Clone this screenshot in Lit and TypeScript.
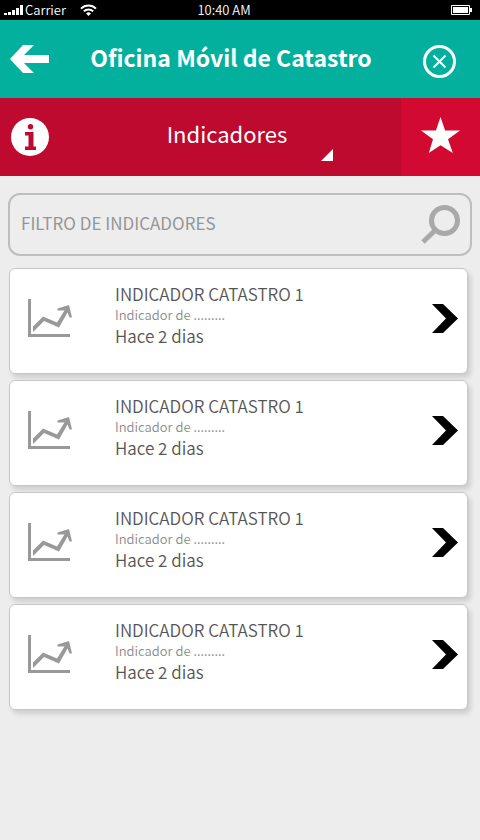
import { LitElement, html, css } from "lit";
import { customElement, property } from "lit/decorators.js";

interface Indicator {
  title: string;
  detail: string;
  age: string;
}

const INDICATORS: Indicator[] = Array.from({ length: 4 }, () => ({
  title: "INDICADOR CATASTRO 1",
  detail: "Indicador de .........",
  age: "Hace 2 dias",
}));

@customElement("status-bar")
class StatusBar extends LitElement {
  static styles = css`
    :host {
      display: grid;
      grid-template-columns: 1fr auto 1fr;
      align-items: center;
      height: 20px;
      padding: 0 8px 0 4px;
      background: #000;
      color: #fff;
      font-size: 13px;
      font-weight: 350;
      line-height: 18px;
    }
    .left {
      display: flex;
      align-items: center;
    }
    .carrier {
      width: 55px;
      margin-left: 2px;
    }
    .right {
      display: flex;
      justify-content: flex-end;
    }
    .time {
      padding-right: 28px;
    }
    svg {
      display: block;
    }
  `;

  render() {
    return html`
      <div class="left">
        <svg width="19" height="10" viewBox="0 0 19 10" fill="#fff" aria-hidden="true">
          <path d="M0 8h3v2H0zM4 7h3v3H4zM8 5h3v5H8zM12 3h3v7h-3zM16 0h3v10h-3z" />
        </svg>
        <span class="carrier">Carrier</span>
        <svg width="17" height="12" viewBox="0 0 17 12" fill="none" stroke="#fff" stroke-width="2" aria-hidden="true">
          <path d="M1 4.6a10.6 10.6 0 0 1 15 0M3.8 7.4a6.6 6.6 0 0 1 9.4 0" />
          <path d="M8.5 12L6 9.6a3.5 3.5 0 0 1 5 0z" fill="#fff" stroke="none" />
        </svg>
      </div>
      <span class="time">10:40 AM</span>
      <div class="right">
        <svg width="21" height="10" viewBox="0 0 21 10" fill="#fff" aria-hidden="true">
          <path d="M.5.5h18v9H.5z" fill="none" stroke="#fff" />
          <path d="M2 2h15v6H2zM19 3h2v4h-2z" />
        </svg>
      </div>
    `;
  }
}

@customElement("indicator-card")
class IndicatorCard extends LitElement {
  @property({ attribute: false }) item!: Indicator;

  static styles = css`
    :host {
      display: block;
    }
    .card {
      box-sizing: border-box;
      display: grid;
      grid-template-columns: 87px 1fr auto;
      align-items: center;
      width: 100%;
      padding: 15px 9px 27px 18px;
      border: 1px solid #c6c6c8;
      border-radius: 6px;
      background: #fff;
      box-shadow: 3px 4px 5px rgba(0, 0, 0, 0.13);
      font: inherit;
      font-weight: 350;
      color: #565656;
      text-align: left;
      cursor: pointer;
    }
    .text {
      display: grid;
    }
    .title,
    .age {
      font-size: 17px;
      line-height: 20px;
    }
    .detail {
      font-size: 13px;
      line-height: 22px;
      color: #8c8c8c;
    }
    svg {
      display: block;
      margin-top: 6px;
    }
  `;

  render() {
    return html`
      <button class="card" type="button">
        <svg width="45" height="39" viewBox="0 0 45 39" aria-hidden="true">
          <path d="M1.500 0v36.500H42" fill="none" stroke="#999" stroke-width="3" />
          <path d="M5 27.500L15 17.500L29 23.500L36.500 11.500L29.500 11.500V9.500L41 6L44 18.500L41.500 18.500L39.500 13.500L31 28.500L16 22L5 33z" fill="#999" />
        </svg>
        <span class="text">
          <span class="title">${this.item.title}</span>
          <span class="detail">${this.item.detail}</span>
          <span class="age">${this.item.age}</span>
        </span>
        <svg width="26" height="29" viewBox="0 0 26 29" aria-hidden="true">
          <path d="M0 0h11l15 14.500L11 29H0l14-14.500z" fill="#000" />
        </svg>
      </button>
    `;
  }
}

@customElement("app-root")
class AppRoot extends LitElement {
  static styles = css`
    :host {
      display: block;
      min-height: 100vh;
      background: #ededed;
      font-family: "Noto Sans CJK SC", "Noto Sans", sans-serif;
    }
    button,
    select,
    input {
      margin: 0;
      padding: 0;
      border: 0;
      background: none;
      color: inherit;
      font: inherit;
    }
    button,
    select {
      cursor: pointer;
    }
    svg {
      display: block;
    }
    .header {
      display: flex;
      align-items: center;
      min-height: 78px;
      background: #03b09e;
      color: #fff;
    }
    .back {
      padding: 0 0 0 10px;
    }
    .heading {
      flex: 1;
      margin: 0;
      padding: 0 10px 4px 0;
      font-size: 23px;
      line-height: 32px;
      font-weight: 700;
      text-align: center;
    }
    .close {
      padding: 5px 24px 0 0;
    }
    .section {
      display: flex;
      min-height: 78px;
      background: #bf0a30;
      color: #fff;
    }
    .info {
      padding: 0 4px 0 11px;
    }
    .picker {
      position: relative;
      flex: 1;
      display: flex;
    }
    .picker select {
      flex: 1;
      appearance: none;
      padding-bottom: 8px;
      font-size: 22px;
      text-align: center;
      text-align-last: center;
    }
    .corner {
      position: absolute;
      left: calc(50% + 94px);
      bottom: 15px;
      pointer-events: none;
    }
    .favourite {
      display: grid;
      place-items: center;
      width: 79px;
      padding-bottom: 4px;
      background: #d20a32;
    }
    .content {
      padding: 17px 8px 24px;
    }
    .filter {
      display: flex;
      align-items: center;
      padding: 10px;
      border: 2px solid #bebebe;
      border-radius: 12px;
      color: #999;
    }
    .filter input {
      flex: 1;
      min-width: 0;
      padding: 0 1px 4px;
      font-size: 17px;
      line-height: 24px;
      outline: 0;
    }
    .filter input::placeholder {
      color: #969696;
      font-weight: 400;
      opacity: 1;
    }
    .list {
      display: grid;
      gap: 6px;
      margin: 0;
      padding: 12px 4px 0 1px;
      list-style: none;
    }
  `;

  render() {
    return html`
      <status-bar></status-bar>
      <header class="header">
        <button class="back" type="button" aria-label="Volver">
          <svg width="39" height="28" viewBox="0 0 39 28" fill="#fff">
            <path d="M0 14L13 0h11L14 10h25v8H14l10 10H13z" />
          </svg>
        </button>
        <h1 class="heading">Oficina Móvil de Catastro</h1>
        <button class="close" type="button" aria-label="Cerrar">
          <svg width="33" height="33" viewBox="0 0 33 33" fill="none" stroke="#fff">
            <circle cx="16.500" cy="16.500" r="15" stroke-width="3" />
            <path d="M10.500 10.500l12 12M22.500 10.500l-12 12" stroke-width="2" />
          </svg>
        </button>
      </header>
      <nav class="section">
        <button class="info" type="button" aria-label="Información">
          <svg width="38" height="38" viewBox="0 0 38 38">
            <circle cx="19" cy="19" r="19" fill="#fff" />
            <circle cx="19.500" cy="8.700" r="2.700" fill="#bf0a30" />
            <path d="M14 14h8.500v14.500H25V32H14v-3.500h3.500v-11H14z" fill="#bf0a30" />
          </svg>
        </button>
        <div class="picker">
          <select aria-label="Sección">
            <option>Indicadores</option>
          </select>
          <svg class="corner" width="12" height="12" viewBox="0 0 12 12" fill="#fff" aria-hidden="true">
            <path d="M12 0v12H0z" />
          </svg>
        </div>
        <button class="favourite" type="button" aria-label="Favoritos">
          <svg width="39" height="36" viewBox="0 0 39 36" fill="#fff">
            <path d="M19.500 0l4.600 13.500H39L27 22.200L31.800 36L19.500 28.200L7.800 36L12 22.200L0 13.500h14.900z" />
          </svg>
        </button>
      </nav>
      <main class="content">
        <label class="filter">
          <input type="text" placeholder="FILTRO DE INDICADORES" aria-label="Filtro de indicadores" />
          <svg width="39" height="39" viewBox="0 0 39 39" fill="none" stroke="#a9a9a9" aria-hidden="true">
            <circle cx="23.500" cy="15.500" r="13" stroke-width="5" />
            <path d="M15 24.500L2 37" stroke-width="5" />
          </svg>
        </label>
        <ul class="list">
          ${INDICATORS.map(
            (item) => html`<li><indicator-card .item=${item}></indicator-card></li>`,
          )}
        </ul>
      </main>
    `;
  }
}
